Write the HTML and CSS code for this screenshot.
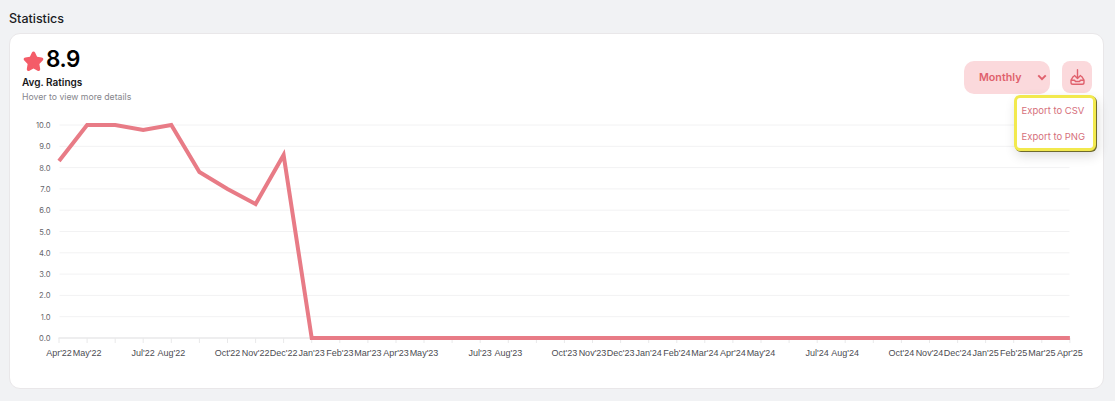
FILE: index.html
```html
<!DOCTYPE html>
<html lang="en">
<head>
<meta charset="utf-8">
<title>Statistics</title>
<link rel="stylesheet" href="styles.css">
</head>
<body>
<section class="stats">
  <h2 class="stats-title">Statistics</h2>
  <div class="card">
    <header class="card-head">
      <div class="summary">
        <div class="score">
          <svg class="star" viewBox="0 0 24 24" width="21" height="21"><path d="M12 1.600c.8 0 1.400.5 1.800 1.300l2.300 4.900 5.200.8c1.900.3 2.500 2.200 1.200 3.500l-3.800 3.900.9 5.500c.3 1.800-1.500 3-3 2.100L12 21l-4.600 2.600c-1.500.9-3.300-.3-3-2.100l.9-5.500-3.800-3.900C.2 10.800.8 8.900 2.700 8.600l5.200-.8 2.300-4.900c.4-.8 1-1.300 1.800-1.300z"/></svg>
          <span class="score-value">8.9</span>
        </div>
        <div class="summary-label">Avg. Ratings</div>
        <div class="summary-hint">Hover to view more details</div>
      </div>
      <div class="actions">
        <button class="period" type="button">
          <span>Monthly</span>
          <svg viewBox="0 0 12 8" width="10" height="7"><path d="M1.500 1.500 6 6l4.500-4.500"/></svg>
        </button>
        <button class="download" type="button" aria-label="Export">
          <svg viewBox="0 0 15 16" width="15" height="16"><path d="M7.500 .8v8.700M4.500 6.500 7.500 9.500 10.500 6.500M3.600 7.500H3.200L1 11.200v2.300c0 1 .8 1.800 1.800 1.800h9.400c1 0 1.800-.8 1.800-1.800v-2.300L11.800 7.500h-.4M1 11.200h3.500l1 1.300h4l1-1.300H14"/></svg>
        </button>
        <div class="menu">
          <div class="menu-item">Export to CSV</div>
          <div class="menu-item">Export to PNG</div>
        </div>
      </div>
    </header>
    <svg class="chart" viewBox="10.500 110 1093 250" width="1093" height="250">
      <g class="grid">
        <path d="M60 125H1070M60 146.300H1070M60 167.600H1070M60 188.900H1070M60 210.200H1070M60 231.500H1070M60 252.800H1070M60 274.100H1070M60 295.400H1070M60 316.700H1070"/>
      </g>
      <path class="axis" d="M59 338H1070"/>
      <path class="ticks" d="M59.500 338v5M87.600 338v5M115.700 338v5M143.700 338v5M171.800 338v5M199.900 338v5M228 338v5M256.100 338v5M284.100 338v5M312.200 338v5M340.300 338v5M368.400 338v5M396.500 338v5M424.500 338v5M452.600 338v5M480.700 338v5M508.800 338v5M536.900 338v5M564.900 338v5M593 338v5M621.100 338v5M649.200 338v5M677.300 338v5M705.300 338v5M733.400 338v5M761.500 338v5M789.600 338v5M817.700 338v5M845.700 338v5M873.800 338v5M901.900 338v5M930 338v5M958.100 338v5M986.100 338v5M1014.200 338v5M1042.300 338v5M1070.400 338v5"/>
      <g class="y-labels">
        <text x="51" y="128">10.0</text><text x="51" y="149.300">9.0</text><text x="51" y="170.600">8.0</text><text x="51" y="191.900">7.0</text><text x="51" y="213.200">6.0</text><text x="51" y="234.500">5.0</text><text x="51" y="255.800">4.0</text><text x="51" y="277.100">3.0</text><text x="51" y="298.400">2.0</text><text x="51" y="319.700">1.0</text><text x="51" y="341">0.0</text>
      </g>
      <g class="x-labels">
        <text x="59.500" y="356">Apr'22</text><text x="87.600" y="356">May'22</text><text x="143.700" y="356">Jul'22</text><text x="171.800" y="356">Aug'22</text><text x="228" y="356">Oct'22</text><text x="256.100" y="356">Nov'22</text><text x="284.100" y="356">Dec'22</text><text x="312.200" y="356">Jan'23</text><text x="340.300" y="356">Feb'23</text><text x="368.400" y="356">Mar'23</text><text x="396.500" y="356">Apr'23</text><text x="424.500" y="356">May'23</text><text x="480.700" y="356">Jul'23</text><text x="508.800" y="356">Aug'23</text><text x="564.900" y="356">Oct'23</text><text x="593" y="356">Nov'23</text><text x="621.100" y="356">Dec'23</text><text x="649.200" y="356">Jan'24</text><text x="677.300" y="356">Feb'24</text><text x="705.300" y="356">Mar'24</text><text x="733.400" y="356">Apr'24</text><text x="761.500" y="356">May'24</text><text x="817.700" y="356">Jul'24</text><text x="845.700" y="356">Aug'24</text><text x="901.900" y="356">Oct'24</text><text x="930" y="356">Nov'24</text><text x="958.100" y="356">Dec'24</text><text x="986.100" y="356">Jan'25</text><text x="1014.200" y="356">Feb'25</text><text x="1042.300" y="356">Mar'25</text><text x="1070.400" y="356">Apr'25</text>
      </g>
      <polyline class="series" points="59.500,161 87.600,125 115.700,125 143.700,130 171.800,125 199.900,172 228,189 256.100,204 284.100,155 312.200,338 1070.400,338"/>
    </svg>
  </div>
</section>
</body>
</html>
```
FILE: styles.css
```css
* { box-sizing: border-box; }
html, body { margin: 0; height: 100%; }
body {
  background: #f1f2f4;
  font-family: "Inter", "Liberation Sans", sans-serif;
  overflow: hidden;
}
.stats { padding: 10px 10px 0 9px; }
.stats-title {
  margin: 0 0 6px;
  font-size: 12.500px;
  line-height: 17px;
  font-weight: 500;
  color: #1c1c1f;
}
.card {
  width: 1095px;
  height: 356px;
  background: #fff;
  border: 1px solid #e9e7e9;
  border-radius: 11px;
}
.card-head {
  height: 76px;
  display: flex;
  justify-content: space-between;
  align-items: flex-start;
  padding: 12px 11px 0 12px;
}
.score { display: flex; align-items: center; height: 26px; }
.star { fill: #f45c68; display: block; margin: 2px 2px 0 1px; }
.score-value {
  font-size: 22.500px;
  line-height: 26px;
  font-weight: 600;
  letter-spacing: -.4px;
  color: #000;
}
.summary-label {
  margin-top: 3px;
  font-size: 10px;
  line-height: 14px;
  font-weight: 600;
  color: #17171a;
}
.summary-hint {
  margin-top: 2px;
  font-size: 8.700px;
  line-height: 12px;
  color: #85858b;
}
.actions {
  position: relative;
  display: flex;
  gap: 12px;
  margin-top: 15px;
}
.period {
  width: 86px;
  height: 33px;
  display: flex;
  align-items: center;
  justify-content: space-between;
  padding: 0 3px 0 15px;
  border: 0;
  border-radius: 10px;
  background: #fbd9dc;
  color: #e0616d;
  font: 600 10.700px "Inter", "Liberation Sans", sans-serif;
}
.period svg {
  fill: none;
  stroke: #e0616d;
  stroke-width: 2.400;
}
.download {
  width: 30px;
  height: 32px;
  display: flex;
  align-items: center;
  justify-content: center;
  padding: 0;
  border: 0;
  border-radius: 8px;
  background: #fbd9dc;
}
.download svg {
  fill: none;
  stroke: #e0616d;
  stroke-width: 1.400;
  stroke-linejoin: round;
  stroke-linecap: round;
}
.menu {
  position: absolute;
  top: 34px;
  right: -4px;
  width: 82px;
  height: 56px;
  background: #fff;
  border: 3px solid #f2e94e;
  border-radius: 6px;
  box-shadow: 1px 1px 0 #6f6a2e, 2px 5px 12px rgba(0, 0, 0, .14);
  display: flex;
  flex-direction: column;
  justify-content: space-between;
  padding: 3px 0 1px;
}
.menu-item {
  padding-left: 4.500px;
  font-size: 9.500px;
  line-height: 20px;
  color: #d66f7b;
  white-space: nowrap;
}
.chart { display: block; }
.grid path { stroke: #f2f2f3; stroke-width: 1; fill: none; }
.axis { stroke: #eeeeef; stroke-width: 2; fill: none; }
.ticks { stroke: #e9e9ea; stroke-width: 1; fill: none; }
.y-labels text {
  font: 7.600px "Inter", "Liberation Sans", sans-serif;
  fill: #66666c;
  text-anchor: end;
}
.x-labels text {
  font: 9px "Liberation Sans", Arial, sans-serif;
  fill: #4c4c52;
  text-anchor: middle;
}
.series {
  fill: none;
  stroke: #e87b86;
  stroke-width: 4;
  stroke-linejoin: miter;
}
```
